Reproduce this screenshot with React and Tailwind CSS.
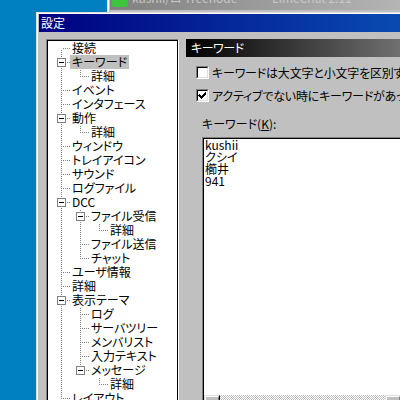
const TREE = [
  [0, '接続'],
  [0, 'キーワード', 1, 1],
  [1, '詳細'],
  [0, 'イベント'],
  [0, 'インタフェース'],
  [0, '動作', 1],
  [1, '詳細'],
  [0, 'ウィンドウ'],
  [0, 'トレイアイコン'],
  [0, 'サウンド'],
  [0, 'ログファイル'],
  [0, 'DCC', 1],
  [1, 'ファイル受信', 1],
  [2, '詳細'],
  [1, 'ファイル送信'],
  [1, 'チャット'],
  [0, 'ユーザ情報'],
  [0, '詳細'],
  [0, '表示テーマ', 1],
  [1, 'ログ'],
  [1, 'サーバツリー'],
  [1, 'メンバリスト'],
  [1, '入力テキスト'],
  [1, 'メッセージ', 1],
  [2, '詳細'],
  [0, 'レイアウト'],
  [0, 'その他'],
];

function hasNext(i) {
  const l = TREE[i][0];
  for (let j = i + 1; j < TREE.length; j++) {
    if (TREE[j][0] < l) return false;
    if (TREE[j][0] === l) return true;
  }
  return false;
}

function ancestorContinues(i, a) {
  for (let j = i - 1; j >= 0; j--) {
    if (TREE[j][0] === a) return hasNext(j);
    if (TREE[j][0] < a) return false;
  }
  return false;
}

function Cell({ through, up, down, horiz, box }) {
  const r = [];
  if (through) for (let y = 1; y < 14; y += 2) r.push(<rect key={'t' + y} x={10} y={y} width={1} height={1} />);
  if (up) for (let y = 1; y <= 7; y += 2) r.push(<rect key={'u' + y} x={10} y={y} width={1} height={1} />);
  if (down) for (let y = 9; y < 14; y += 2) r.push(<rect key={'d' + y} x={10} y={y} width={1} height={1} />);
  if (horiz) for (let x = 12; x < 19; x += 2) r.push(<rect key={'h' + x} x={x} y={7} width={1} height={1} />);
  return (
    <svg width="19" height="14" className="block shrink-0" shapeRendering="crispEdges">
      <g fill="#808080">{r}</g>
      {box ? (
        <g>
          <rect x="6.5" y="3.5" width="8" height="8" fill="#fff" stroke="#808080" />
          <rect x="8" y="7" width="5" height="1" fill="#000" />
        </g>
      ) : null}
    </svg>
  );
}

function TreeRow({ i }) {
  const [lvl, text, box, sel] = TREE[i];
  const cells = [];
  for (let a = 0; a < lvl; a++) {
    cells.push(<Cell key={a} through={ancestorContinues(i, a)} />);
  }
  cells.push(<Cell key="own" up={i !== 0} down={hasNext(i)} horiz box={box} />);
  return (
    <div className="flex h-[14px] items-center whitespace-nowrap">
      {cells}
      <span className={'h-[14px] px-[2px] leading-[14px] text-black ' + (sel ? 'bg-[#c0c0c0]' : '')}>{text}</span>
    </div>
  );
}

function Checkbox({ checked }) {
  return (
    <div className="h-[13px] w-[13px] shrink-0 border-t border-l border-[#808080] border-r-white border-b-white border-r border-b">
      <div className="h-full w-full border-t border-l border-black border-r border-b border-r-[#dfdfdf] border-b-[#dfdfdf] bg-white">
        {checked ? (
          <svg width="9" height="9" className="block" shapeRendering="crispEdges">
            <path d="M1 3h1v1h1v1h1v-1h1v-1h1v-1h1v-1h1v3h-1v1h-1v1h-1v1h-1v1h-1v-1h-1v-1h-1v-1h-1z" fill="#000" />
          </svg>
        ) : null}
      </div>
    </div>
  );
}

function ScrollBtn({ dir }) {
  return (
    <div className="h-[16px] w-[16px] shrink-0 border-t border-l border-[#dfdfdf] border-r border-b border-r-black border-b-black">
      <div className="flex h-full w-full items-center justify-center border-t border-l border-white border-r border-b border-r-[#808080] border-b-[#808080] bg-[#c0c0c0]">
        <svg width="4" height="7" shapeRendering="crispEdges">
          {dir === 'l' ? <path d="M4 0v7L0 3.5z" fill="#000" /> : <path d="M0 0v7l4-3.5z" fill="#000" />}
        </svg>
      </div>
    </div>
  );
}

export default function App() {
  return (
    <div className="flex h-[400px] w-[400px] flex-col overflow-hidden bg-[#0080c0] font-['Noto_Sans_CJK_JP','Noto_Sans',sans-serif] text-[12px] [font-feature-settings:'palt']">
      {/* background window strip */}
      <div className="flex h-[12px] shrink-0">
        <div className="w-[107px] shrink-0" />
        <div className="flex-1 overflow-hidden border-l border-[#dfdfdf] bg-[#c0c0c0]">
          <div className="h-full border-l border-white pl-[1px]">
            <div className="flex h-[10px] items-end overflow-hidden bg-[linear-gradient(to_right,#808080,#b4b4b4)] pl-[2px]">
              <svg width="16" height="16" className="mb-[3px] block shrink-0">
                <rect x="0" y="0" width="16" height="16" rx="3" fill="#3cc43c" />
                <path d="M2 5 Q7 11 14 4" stroke="#fff" strokeWidth="2.2" fill="none" />
              </svg>
              <span className="mb-[4px] ml-[4px] whitespace-nowrap text-[12px] leading-[16px] text-[#c8c8c8]">
                kushii/ロ Treenode　—　LimeChat 2.11
              </span>
            </div>
          </div>
        </div>
      </div>

      {/* dialog row */}
      <div className="flex flex-1">
        <div className="w-[36px] shrink-0" />
        <div className="w-[400px] shrink-0 border-t border-l border-[#dfdfdf]">
          <div className="flex h-full flex-col border-t border-l border-white bg-[#c0c0c0] pl-[1px]">
            <div className="flex h-[18px] shrink-0 items-center bg-[linear-gradient(to_right,#000080,#0a52b6)] pl-[2px] text-[12px] text-white">
              設定
            </div>
            <div className="flex flex-1 gap-[7px] pt-[7px] pl-[7px]">
              {/* tree */}
              <div className="h-[400px] w-[133px] shrink-0 border-t border-l border-[#808080] border-r border-b border-r-white border-b-white">
                <div className="h-full border-t border-l border-r border-black bg-white pl-[3px] text-black">
                  {TREE.map((_, i) => (
                    <TreeRow key={i} i={i} />
                  ))}
                </div>
              </div>
              {/* right panel */}
              <div className="flex flex-1 flex-col">
                <div className="flex h-[18px] shrink-0 items-center bg-[linear-gradient(to_right,#000000,#959595)] pl-[5px] tracking-[-0.5px] text-white">
                  キーワード
                </div>
                <div className="mt-[9px] ml-[10px] flex h-[13px] items-center gap-[3px] whitespace-nowrap">
                  <Checkbox />
                  <span className="leading-[13px] tracking-[-0.2px]">キーワードは大文字と小文字を区別する</span>
                </div>
                <div className="mt-[10px] ml-[10px] flex h-[13px] items-center gap-[3px] whitespace-nowrap">
                  <Checkbox checked />
                  <span className="leading-[13px] tracking-[-0.2px]">アクティブでない時にキーワードがあったら知らせる</span>
                </div>
                <div className="mt-[15px] ml-[16px] h-[14px] leading-[14px] whitespace-nowrap">
                  キーワード(<span className="underline">K</span>):
                </div>
                <div className="mt-[6px] ml-[16px] h-[276px] w-[201px] shrink-0 border-t border-l border-[#808080] border-r border-b border-r-white border-b-white">
                  <div className="flex h-full flex-col border-t border-l border-black border-r border-b border-r-[#dfdfdf] border-b-[#dfdfdf] bg-white">
                    <div className="flex-1 pt-0 pl-[1px] leading-[12px] text-black">
                      <div>kushii</div>
                      <div>クシイ</div>
                      <div>櫛井</div>
                      <div>941</div>
                    </div>
                    <div className="flex h-[16px] shrink-0">
                      <ScrollBtn dir="l" />
                      <div className="flex-1 bg-[repeating-conic-gradient(#c0c0c0_0%_25%,#ffffff_0%_50%)] bg-[length:2px_2px]" />
                      <ScrollBtn dir="r" />
                    </div>
                  </div>
                </div>
              </div>
            </div>
          </div>
        </div>
      </div>
    </div>
  );
}
